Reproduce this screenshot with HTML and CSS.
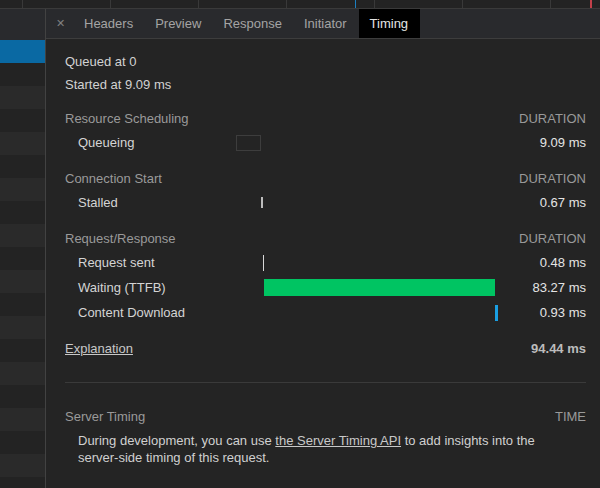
FILE: index.html
```html
<!DOCTYPE html>
<html>
<head>
<meta charset="utf-8">
<link rel="stylesheet" href="styles.css">
</head>
<body>
<div class="strip">
  <span class="marker marker-blue"></span>
  <span class="marker marker-red"></span>
</div>
<div class="main">
  <div class="list">
    <div class="list-head"></div>
    <div class="list-row sel"></div>
    <div class="list-row"></div>
    <div class="list-row alt"></div>
    <div class="list-row"></div>
    <div class="list-row alt"></div>
    <div class="list-row"></div>
    <div class="list-row alt"></div>
    <div class="list-row"></div>
    <div class="list-row alt"></div>
    <div class="list-row"></div>
    <div class="list-row alt"></div>
    <div class="list-row"></div>
    <div class="list-row alt"></div>
    <div class="list-row"></div>
    <div class="list-row alt"></div>
    <div class="list-row"></div>
    <div class="list-row alt"></div>
    <div class="list-row"></div>
    <div class="list-row alt"></div>
    <div class="list-row"></div>
  </div>
  <div class="detail">
    <div class="tabs">
      <div class="close">&#x2715;</div>
      <div class="tab">Headers</div>
      <div class="tab">Preview</div>
      <div class="tab">Response</div>
      <div class="tab">Initiator</div>
      <div class="tab active">Timing</div>
    </div>
    <div class="timing">
      <div class="line">Queued at 0</div>
      <div class="line">Started at 9.09 ms</div>

      <div class="sec first">
        <div class="sec-head">Resource Scheduling</div>
        <div class="sec-unit">DURATION</div>
        <div class="label">Queueing</div>
        <div class="bar-cell"><span class="bar queueing" style="margin-left:0px;width:25px"></span></div>
        <div class="val">9.09 ms</div>
      </div>

      <div class="sec">
        <div class="sec-head">Connection Start</div>
        <div class="sec-unit">DURATION</div>
        <div class="label">Stalled</div>
        <div class="bar-cell"><span class="bar stalled" style="margin-left:25.2px;width:1.9px"></span></div>
        <div class="val">0.67 ms</div>
      </div>

      <div class="sec">
        <div class="sec-head">Request/Response</div>
        <div class="sec-unit">DURATION</div>
        <div class="label">Request sent</div>
        <div class="bar-cell"><span class="bar sent" style="margin-left:27.1px;width:1.3px"></span></div>
        <div class="val">0.48 ms</div>
        <div class="label">Waiting (TTFB)</div>
        <div class="bar-cell"><span class="bar waiting" style="margin-left:28.4px;width:231px"></span></div>
        <div class="val">83.27 ms</div>
        <div class="label">Content Download</div>
        <div class="bar-cell"><span class="bar download" style="margin-left:259.4px;width:2.6px"></span></div>
        <div class="val">0.93 ms</div>
      </div>

      <div class="sec total">
        <div class="explain"><span class="link">Explanation</span></div>
        <div class="val total-val">94.44 ms</div>
      </div>

      <div class="rule"></div>

      <div class="sec server">
        <div class="sec-head">Server Timing</div>
        <div class="sec-unit">TIME</div>
      </div>
      <p class="desc">During development, you can use <span class="link">the Server Timing API</span> to add insights into the <span class="nowrap">server-side</span> timing of this request.</p>
    </div>
  </div>
</div>
</body>
</html>
```

FILE: styles.css
```css
html, body {
  margin: 0;
  padding: 0;
}
body {
  width: 600px;
  height: 488px;
  overflow: hidden;
  background: #242424;
  font-family: "Liberation Sans", Arial, Helvetica, sans-serif;
  font-size: 13px;
  color: #d4d4d4;
}
.strip {
  position: relative;
  height: 8px;
  border-bottom: 1px solid #3a3a3a;
  background-color: #232323;
  background-image: repeating-linear-gradient(90deg, transparent 0, transparent 22px, #393939 22px, #393939 23px, transparent 23px, transparent 88px);
}
.marker {
  position: absolute;
  top: 0;
  width: 1px;
  height: 8px;
}
.marker-blue { left: 355px; background: #1c7fc0; }
.marker-red { left: 590px; width: 2px; background: #c2404a; }

.main {
  display: flex;
  height: 479px;
}
.list {
  width: 45px;
  flex: none;
  border-right: 1px solid #424242;
  overflow: hidden;
}
.list-head {
  height: 31px;
  background: #292a2d;
}
.list-row {
  height: 23px;
  background: #232323;
}
.list-row.alt { background: #2a2a2a; }
.list-row.sel { background: #0a69a3; }

.detail {
  flex: 1;
  min-width: 0;
  background: #242424;
}
.tabs {
  display: flex;
  height: 29px;
  background: #292a2d;
  border-bottom: 1px solid #3d3d3d;
}
.close {
  width: 27px;
  display: flex;
  align-items: center;
  justify-content: center;
  color: #808080;
  font-size: 11px;
  padding-left: 2px;
  box-sizing: border-box;
}
.tab {
  padding: 0 11px;
  line-height: 29px;
  color: #a4a4a4;
}
.tab.active {
  background: #000;
  color: #e4e4e4;
  margin-left: 1px;
  padding: 0 12px 0 11px;
}

.timing {
  padding: 11px 14px 0 19px;
}
.line {
  height: 23px;
  line-height: 23px;
  color: #d2d2d2;
}
.sec {
  display: grid;
  grid-template-columns: 1fr 262px 88px;
  margin-top: 12px;
}
.sec.first { margin-top: 11px; }
.sec-head {
  grid-column: 1 / 3;
  height: 23px;
  line-height: 23px;
  color: #9a9a9a;
}
.sec-unit {
  height: 23px;
  line-height: 23px;
  text-align: right;
  color: #9a9a9a;
}
.label {
  padding-left: 13px;
  height: 25px;
  line-height: 25px;
  color: #d4d4d4;
}
.bar-cell {
  display: flex;
  align-items: center;
  height: 25px;
}
.bar {
  display: block;
  flex: none;
  height: 16px;
  box-sizing: border-box;
}
.bar.queueing {
  border: 1px solid #3d3d3d;
}
.bar.stalled {
  height: 11px;
  background: #bdbdbd;
}
.bar.sent {
  background: #d8d8d8;
}
.bar.waiting {
  height: 17px;
  background: #00c462;
}
.bar.download {
  background: #1a9fe2;
}
.val {
  height: 25px;
  line-height: 25px;
  text-align: right;
  color: #e4e4e4;
}
.explain {
  grid-column: 1 / 3;
  height: 23px;
  line-height: 23px;
}
.link {
  color: #c8c8c8;
  text-decoration: underline;
}
.total-val {
  height: 23px;
  line-height: 23px;
  font-weight: bold;
  color: #bcbcbc;
}
.rule {
  margin-top: 22px;
  height: 1px;
  background: #3a3a3a;
}
.sec.server { margin-top: 22px; }
.desc {
  margin: 4px 0 0 0;
  padding-left: 13px;
  line-height: 17px;
  color: #d0d0d0;
}
.nowrap { white-space: nowrap; }
```
